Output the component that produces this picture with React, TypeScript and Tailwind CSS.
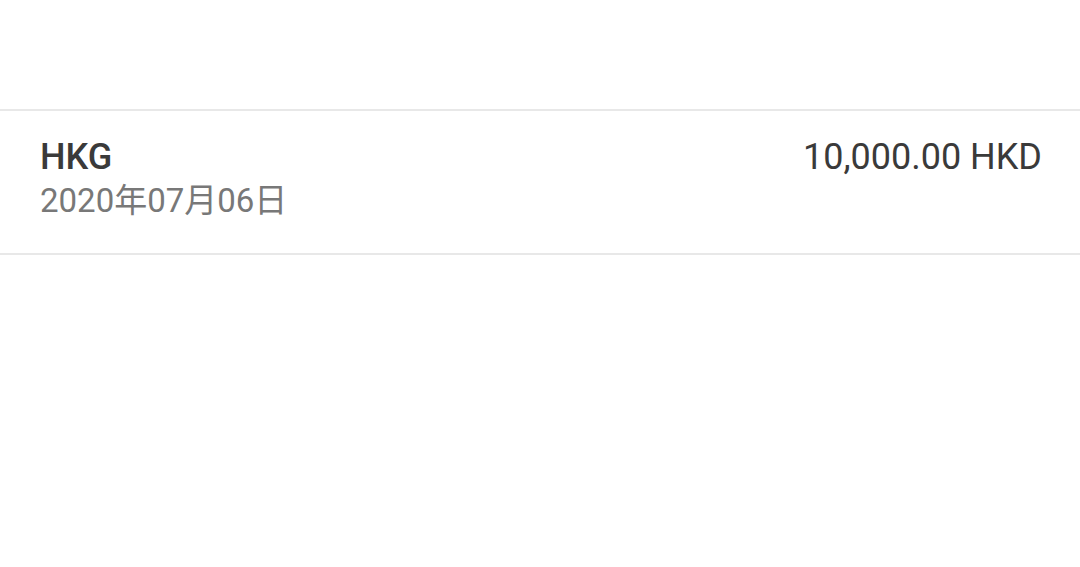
export default function App() {
  return (
    <div className="w-[1080px] h-[567px] bg-white font-['Roboto',sans-serif]">
      <div className="h-[109px]" />
      <div className="border-y-2 border-[#e8e8e8] flex justify-between pl-10 pr-[38px] pt-6 pb-[30px]">
        <div className="flex flex-col">
          <span className="text-[36px] leading-[44px] font-medium text-[#3a3a3a]">HKG</span>
          <span className="text-[33px] leading-[44px] text-[#787878] font-['Roboto','Noto_Sans_CJK_TC',sans-serif]">
            2020年07月06日
          </span>
        </div>
        <span className="text-[36px] leading-[44px] text-[#3a3a3a]">10,000.00 HKD</span>
      </div>
    </div>
  );
}
